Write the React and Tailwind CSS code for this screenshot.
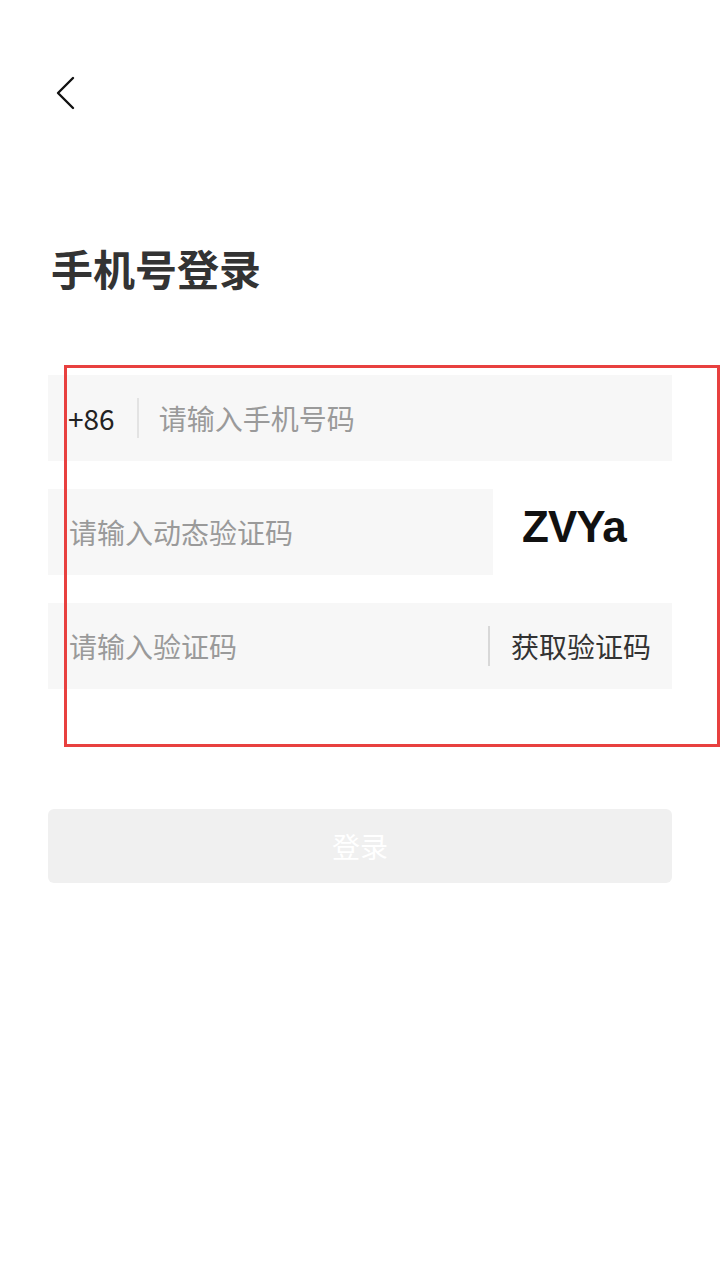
import React from 'react';

const font = { fontFamily: '"Noto Sans CJK SC", "Noto Sans", sans-serif' };

const LoginPage = () => {
  return (
    <div className="relative min-h-[1280px] w-[720px] bg-white" style={font}>
      {/* back */}
      <div className="pt-[76px] pl-[54px]">
        <svg width="22" height="34" viewBox="0 0 22 34" fill="none">
          <path d="M19 2L4 17L19 32" stroke="#111" strokeWidth="2.4" strokeLinecap="round" strokeLinejoin="round" />
        </svg>
      </div>

      <div className="px-[48px]">
        <h1 className="mt-[130px] pl-[3px] text-[42px] leading-[56px] font-bold text-[#333]">手机号登录</h1>

        <div className="mt-[79px] flex flex-col gap-[28px]">
          {/* phone */}
          <div className="flex h-[86px] items-center bg-[#f7f7f7] pl-[20px]">
            <span className="text-[28px] text-[#222]">+86</span>
            <span className="ml-[22px] mr-[20px] h-[40px] w-[2px] bg-[#e3e3e3]" />
            <span className="text-[28px] text-[#9a9a9a]">请输入手机号码</span>
          </div>

          {/* captcha */}
          <div className="flex h-[86px] items-stretch">
            <div className="flex w-[445px] items-center bg-[#f7f7f7] pl-[21px]">
              <span className="text-[28px] text-[#9a9a9a]">请输入动态验证码</span>
            </div>
            <div className="flex flex-1 items-center pb-[10px] pl-[29px]">
              <span
                className="text-[44px] font-bold leading-none tracking-[-1px] text-[#111]"
                style={{ fontFamily: '"Liberation Sans", Arial, sans-serif' }}
              >
                ZVYa
              </span>
            </div>
          </div>

          {/* sms code */}
          <div className="flex h-[86px] items-center bg-[#f7f7f7] pl-[21px]">
            <span className="flex-1 text-[28px] text-[#9a9a9a]">请输入验证码</span>
            <span className="h-[40px] w-[2px] bg-[#d8d8d8]" />
            <span className="pl-[21px] pr-[21px] text-[28px] text-[#333]">获取验证码</span>
          </div>
        </div>

        <button className="mt-[120px] flex h-[74px] w-full items-center justify-center rounded-[6px] bg-[#f0f0f0] text-[28px] text-white">
          登录
        </button>
      </div>

      {/* annotation box */}
      <div className="absolute left-[64px] top-[365px] h-[382px] w-[656px] border-[3px] border-[#e8403f]" />
    </div>
  );
};

export default function App() {
  return <LoginPage />;
}
